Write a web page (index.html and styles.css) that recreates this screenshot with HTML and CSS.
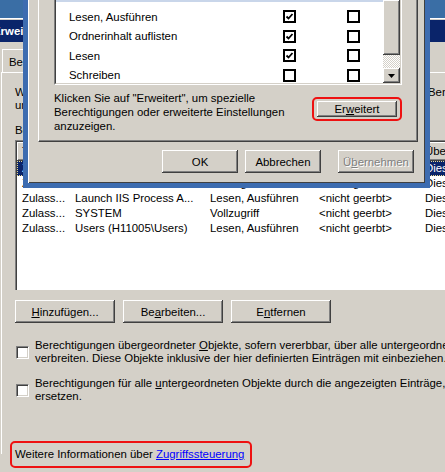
FILE: index.html
```html
<!DOCTYPE html>
<html lang="de">
<head>
    <meta charset="UTF-8">
    <title>Berechtigungen</title>
    <link rel="stylesheet" href="styles.css">
</head>
<body>
<div class="screen">

    <!-- background window: advanced security settings -->
    <div class="back-win">
        <div class="back-title">Erweiterte Sicherheitseinstellungen für wwwroot</div>
        <div class="back-tabs">
            <span class="back-tab active">Berechtigungen</span>
            <span class="back-tab">Überwachung</span>
            <span class="back-tab">Besitzer</span>
            <span class="back-tab">Effektive Berechtigungen</span>
        </div>
        <div class="back-page">
            <p class="intro"><span class="intro-lead">Wählen Sie einen Eintrag aus, um weitere Informationen</span>Berechtigungseinträge anzuzeigen,<br>und klicken Sie dann auf "Bearbeiten".</p>
            <p class="list-label">Berechtigungseinträge:</p>

            <div class="entry-list">
                <div class="entry-head">
                    <span>Typ</span>
                    <span>Name</span>
                    <span>Berechtigung</span>
                    <span>Geerbt von</span>
                    <span>Übernehmen für</span>
                </div>
                <div class="entry-row selected">
                    <span>Zulass...</span>
                    <span>Administratoren (H1...</span>
                    <span>Vollzugriff</span>
                    <span>&lt;nicht geerbt&gt;</span>
                    <span>Diesen Ordner, Unterordner</span>
                </div>
                <div class="entry-row">
                    <span>Zulass...</span>
                    <span>ERSTELLER-BESITZER</span>
                    <span>Vollzugriff</span>
                    <span>&lt;nicht geerbt&gt;</span>
                    <span>Diesen Ordner, Unterordner</span>
                </div>
                <div class="entry-row">
                    <span>Zulass...</span>
                    <span>Launch IIS Process A...</span>
                    <span>Lesen, Ausführen</span>
                    <span>&lt;nicht geerbt&gt;</span>
                    <span>Diesen Ordner, Unterordner</span>
                </div>
                <div class="entry-row">
                    <span>Zulass...</span>
                    <span>SYSTEM</span>
                    <span>Vollzugriff</span>
                    <span>&lt;nicht geerbt&gt;</span>
                    <span>Diesen Ordner, Unterordner</span>
                </div>
                <div class="entry-row">
                    <span>Zulass...</span>
                    <span>Users (H11005\Users)</span>
                    <span>Lesen, Ausführen</span>
                    <span>&lt;nicht geerbt&gt;</span>
                    <span>Diesen Ordner, Unterordner</span>
                </div>
            </div>

            <div class="entry-buttons">
                <button class="btn wide"><u>H</u>inzufügen...</button>
                <button class="btn wide">Be<u>a</u>rbeiten...</button>
                <button class="btn wide">E<u>n</u>tfernen</button>
            </div>

            <label class="option first">
                <span class="box"></span>
                <span class="option-text">Berechtigungen übergeordneter <u>O</u>bjekte, sofern vererbbar, über alle untergeordneten Objekte<br>verbreiten. Diese Objekte inklusive der hier definierten Einträgen mit einbeziehen.</span>
            </label>
            <label class="option">
                <span class="box"></span>
                <span class="option-text">Berechtigungen für alle <u>u</u>ntergeordneten Objekte durch die angezeigten Einträge, die für<br>ersetzen.</span>
            </label>

            <div class="more-info">Weitere Informationen über <a href="#">Zugriffssteuerung</a></div>
        </div>
    </div>

    <!-- foreground window: permission entry dialog -->
    <div class="fg-win">
        <div class="fg-page">
            <div class="perm-list">
                <div class="perm-inner">
                    <div class="perm-rows">
                        <div class="perm-row">
                            <span class="perm-name">Lesen, Ausführen</span>
                            <span class="chk on"><svg viewBox="0 0 9 9"><path d="M1.5 4.5 L3.5 6.5 L7.5 2"/></svg></span>
                            <span></span>
                            <span class="chk"></span>
                        </div>
                        <div class="perm-row">
                            <span class="perm-name">Ordnerinhalt auflisten</span>
                            <span class="chk on"><svg viewBox="0 0 9 9"><path d="M1.5 4.5 L3.5 6.5 L7.5 2"/></svg></span>
                            <span></span>
                            <span class="chk"></span>
                        </div>
                        <div class="perm-row">
                            <span class="perm-name">Lesen</span>
                            <span class="chk on"><svg viewBox="0 0 9 9"><path d="M1.5 4.5 L3.5 6.5 L7.5 2"/></svg></span>
                            <span></span>
                            <span class="chk"></span>
                        </div>
                        <div class="perm-row">
                            <span class="perm-name">Schreiben</span>
                            <span class="chk"></span>
                            <span></span>
                            <span class="chk"></span>
                        </div>
                    </div>
                    <div class="vscroll">
                        <div class="thumb"></div>
                        <div class="track"></div>
                        <div class="arrow"><svg viewBox="0 0 7 4"><path d="M0 0 H7 L3.5 4 Z"/></svg></div>
                    </div>
                </div>
            </div>

            <div class="hint">
                <p>Klicken Sie auf "Erweitert", um spezielle<br>Berechtigungen oder erweiterte Einstellungen<br>anzuzeigen.</p>
                <span class="mark"><button class="btn adv">Er<u>w</u>eitert</button></span>
            </div>
        </div>

        <div class="fg-buttons">
            <button class="btn">OK</button>
            <button class="btn">Abbrechen</button>
            <button class="btn" disabled>Ü<u>b</u>ernehmen</button>
        </div>
    </div>

</div>
</body>
</html>
```

FILE: styles.css
```css
* {
    box-sizing: border-box;
}

body {
    margin: 0;
    width: 445px;
    height: 472px;
    overflow: hidden;
    background: #3a6ea5;
    font-family: 'Liberation Sans', Arial, sans-serif;
    font-size: 11.4px;
    color: #000;
}

p {
    margin: 0;
}

u {
    text-decoration-thickness: 1px;
    text-underline-offset: 1px;
}

.screen {
    position: relative;
    height: 472px;
    padding-top: 18px;
    overflow: hidden;
}

/* classic 3d push button */
.btn {
    display: block;
    height: 23px;
    width: 76px;
    padding: 0;
    font: inherit;
    color: #000;
    background: #d4d0c8;
    border: none;
    box-shadow: inset -1px -1px #404040, inset 1px 1px #fff, inset -2px -2px #808080, inset 2px 2px #d4d0c8;
}

.btn:disabled {
    color: #808080;
    text-shadow: 1px 1px #fff;
}

/* ---------- background window ---------- */

.back-win {
    width: 480px;
    height: 454px;
    background: #d4d0c8;
    padding-top: 2px;
    box-shadow: inset 0 1px #fff;
}

.back-title {
    height: 22px;
    line-height: 22px;
    background: #0a246a;
    color: #fff;
    font-weight: bold;
    white-space: nowrap;
    overflow: hidden;
    text-indent: -7px;
}

.back-tabs {
    height: 30px;
    display: flex;
    align-items: flex-end;
    padding-left: 2px;
}

.back-tab {
    height: 20px;
    line-height: 20px;
    padding: 0 6px;
    border-top: 1px solid #fff;
    border-left: 1px solid #fff;
    border-right: 1px solid #404040;
    white-space: nowrap;
}

.back-tab.active {
    height: 23px;
    line-height: 24px;
}

.back-page {
    margin-left: 1px;
    border-left: 1px solid #fff;
    border-top: 1px solid #fff;
    padding: 13px 0 0 13px;
    height: 382px;
}

.intro {
    line-height: 13px;
    white-space: nowrap;
}

.intro-lead {
    display: inline-block;
    width: 413px;
}

.list-label {
    margin-top: 12px;
    line-height: 13px;
}

.entry-list {
    margin-top: 3px;
    height: 150px;
    background: #fff;
    border-top: 1px solid #808080;
    border-left: 1px solid #808080;
    box-shadow: inset 1px 1px #404040;
    padding: 1px 0 0 1px;
    white-space: nowrap;
}

.entry-head,
.entry-row {
    display: grid;
    grid-template-columns: 53px 135px 109px 106px 200px;
}

.entry-head span {
    height: 19px;
    line-height: 18px;
    padding-left: 5px;
    background: #d4d0c8;
    box-shadow: inset -1px -1px #404040, inset 1px 1px #fff, inset -2px -2px #808080;
}

.entry-row span {
    height: 15px;
    line-height: 15px;
    padding-left: 5px;
    overflow: hidden;
}

.entry-row.selected {
    background: #0a246a;
    color: #fff;
    outline: 1px dotted #e8d890;
    outline-offset: -1px;
}

.entry-buttons {
    display: flex;
    gap: 8px;
    margin-top: 10px;
}

.btn.wide {
    width: 100px;
}

.option {
    display: flex;
    align-items: center;
    gap: 6px;
    margin-top: 16px;
    white-space: nowrap;
    line-height: 13px;
}

.option + .option {
    margin-top: 12px;
}

.box {
    flex: none;
    width: 13px;
    height: 13px;
    margin-left: 1px;
    background: #fff;
    border-top: 1px solid #808080;
    border-left: 1px solid #808080;
    border-right: 1px solid #fff;
    border-bottom: 1px solid #fff;
    box-shadow: inset 1px 1px #404040, inset -1px -1px #d4d0c8;
}

.more-info {
    display: inline-block;
    margin: 38px 0 0 -5px;
    padding: 5px 6px 5px 3px;
    border: 2px solid #ee1111;
    border-radius: 5px;
    line-height: 13px;
}

.more-info a {
    color: #0000ff;
}

/* ---------- foreground window ---------- */

.fg-win {
    position: absolute;
    left: 23px;
    top: 0;
    width: 407px;
    height: 188px;
    background: #d4d0c8;
    border: 5px solid #3d6cb0;
    border-top: none;
    box-shadow: inset 1px 0 #fff, inset -1px -1px #404040;
}

.fg-page {
    margin-left: 10px;
    width: 380px;
    height: 142px;
    border-left: 1px solid #fff;
    border-right: 1px solid #404040;
    border-bottom: 1px solid #404040;
    box-shadow: inset -1px -1px #808080;
    padding: 0 15px 0 15px;
}

.perm-list {
    width: 348px;
    height: 85px;
    border-left: 1px solid #808080;
    border-right: 1px solid #fff;
    border-bottom: 1px solid #fff;
}

.perm-inner {
    height: 100%;
    display: flex;
    background: #fff;
    border-left: 1px solid #404040;
    border-right: 1px solid #d4d0c8;
    border-bottom: 1px solid #d4d0c8;
}

.perm-rows {
    flex: 1;
    padding-top: 5px;
    border-top: 2px solid #c9d6ea;
}

.perm-row {
    display: grid;
    grid-template-columns: 227px 13px 51px 13px;
    align-items: center;
    height: 19.5px;
}

.perm-name {
    padding-left: 13px;
    white-space: nowrap;
}

.chk {
    width: 13px;
    height: 13px;
    border: 2px solid #000;
    background: #fff;
    display: flex;
}

.chk svg {
    width: 9px;
    height: 9px;
    fill: none;
    stroke: #000;
    stroke-width: 1.8;
}

.vscroll {
    width: 17px;
    display: flex;
    flex-direction: column;
}

.vscroll .thumb,
.vscroll .arrow {
    background: #d4d0c8;
    box-shadow: inset -1px -1px #404040, inset 1px 1px #fff, inset -2px -2px #808080;
}

.vscroll .thumb {
    height: 55px;
}

.vscroll .track {
    height: 13px;
    background: repeating-conic-gradient(#fff 0 25%, #d4d0c8 0 50%) 0 0 / 2px 2px;
}

.vscroll .arrow {
    flex: 1;
    display: flex;
    align-items: center;
    justify-content: center;
}

.vscroll .arrow svg {
    width: 7px;
    height: 4px;
}

.hint {
    display: flex;
    justify-content: space-between;
    margin-top: 6px;
}

.hint p {
    line-height: 14px;
}

.mark {
    align-self: flex-start;
    margin-top: 6px;
    padding: 2px 3px;
    border: 2px solid #ee1111;
    border-radius: 5px;
}

.btn.adv {
    width: 80px;
    height: 16px;
}

.fg-buttons {
    display: flex;
    justify-content: flex-end;
    gap: 7px;
    margin-top: 8px;
    padding-right: 11px;
}

.fg-buttons .btn:last-child {
    margin-left: 10px;
}
```
